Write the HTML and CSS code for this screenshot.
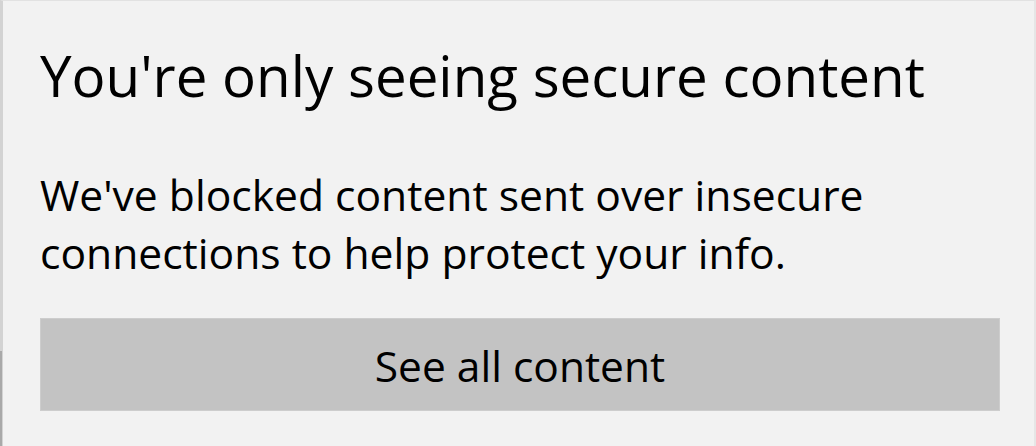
FILE: index.html
```html
<!DOCTYPE html>
<html lang="en">
<head>
<meta charset="utf-8">
<title>You're only seeing secure content</title>
<link rel="stylesheet" href="styles.css">
</head>
<body>
<div class="flyout">
  <h1 class="title">You're only seeing secure content</h1>
  <p class="message">We've blocked content sent over insecure<br>connections to help protect your info.</p>
  <button class="action" type="button">See all content</button>
</div>
</body>
</html>
```
FILE: styles.css
```css
html, body {
  margin: 0;
  padding: 0;
  background: #f2f2f2;
}
body {
  font-family: "Open Sans", "Noto Sans", sans-serif;
  color: #000;
}
.flyout {
  position: relative;
  box-sizing: border-box;
  width: 1036px;
  height: 446px;
  background: #f2f2f2;
  border-top: 1px solid #e2e2e2;
  border-left: 3px solid #d3d3d3;
  border-right: 2px solid #e6e6e6;
  padding: 36px 34px 0 37px;
  display: flex;
  flex-direction: column;
  align-items: stretch;
}
.flyout::after {
  content: "";
  position: absolute;
  left: -3px;
  top: 350px;
  bottom: 0;
  width: 2px;
  background: #a9a9a9;
}
.title {
  margin: 0;
  font-size: 56.5px;
  font-weight: 400;
  line-height: 77px;
  white-space: nowrap;
}
.message {
  margin: 51px 0 0;
  font-size: 42.6px;
  line-height: 58px;
  white-space: nowrap;
}
.action {
  margin-top: 37px;
  box-sizing: border-box;
  width: 960px;
  height: 93px;
  padding: 19px 0 16px;
  border: 1px solid #cdcdcd;
  background: #c3c3c3;
  color: #000;
  font-family: "Open Sans", "Noto Sans", sans-serif;
  font-size: 42.5px;
  line-height: 56px;
  text-align: center;
  cursor: pointer;
}
```
